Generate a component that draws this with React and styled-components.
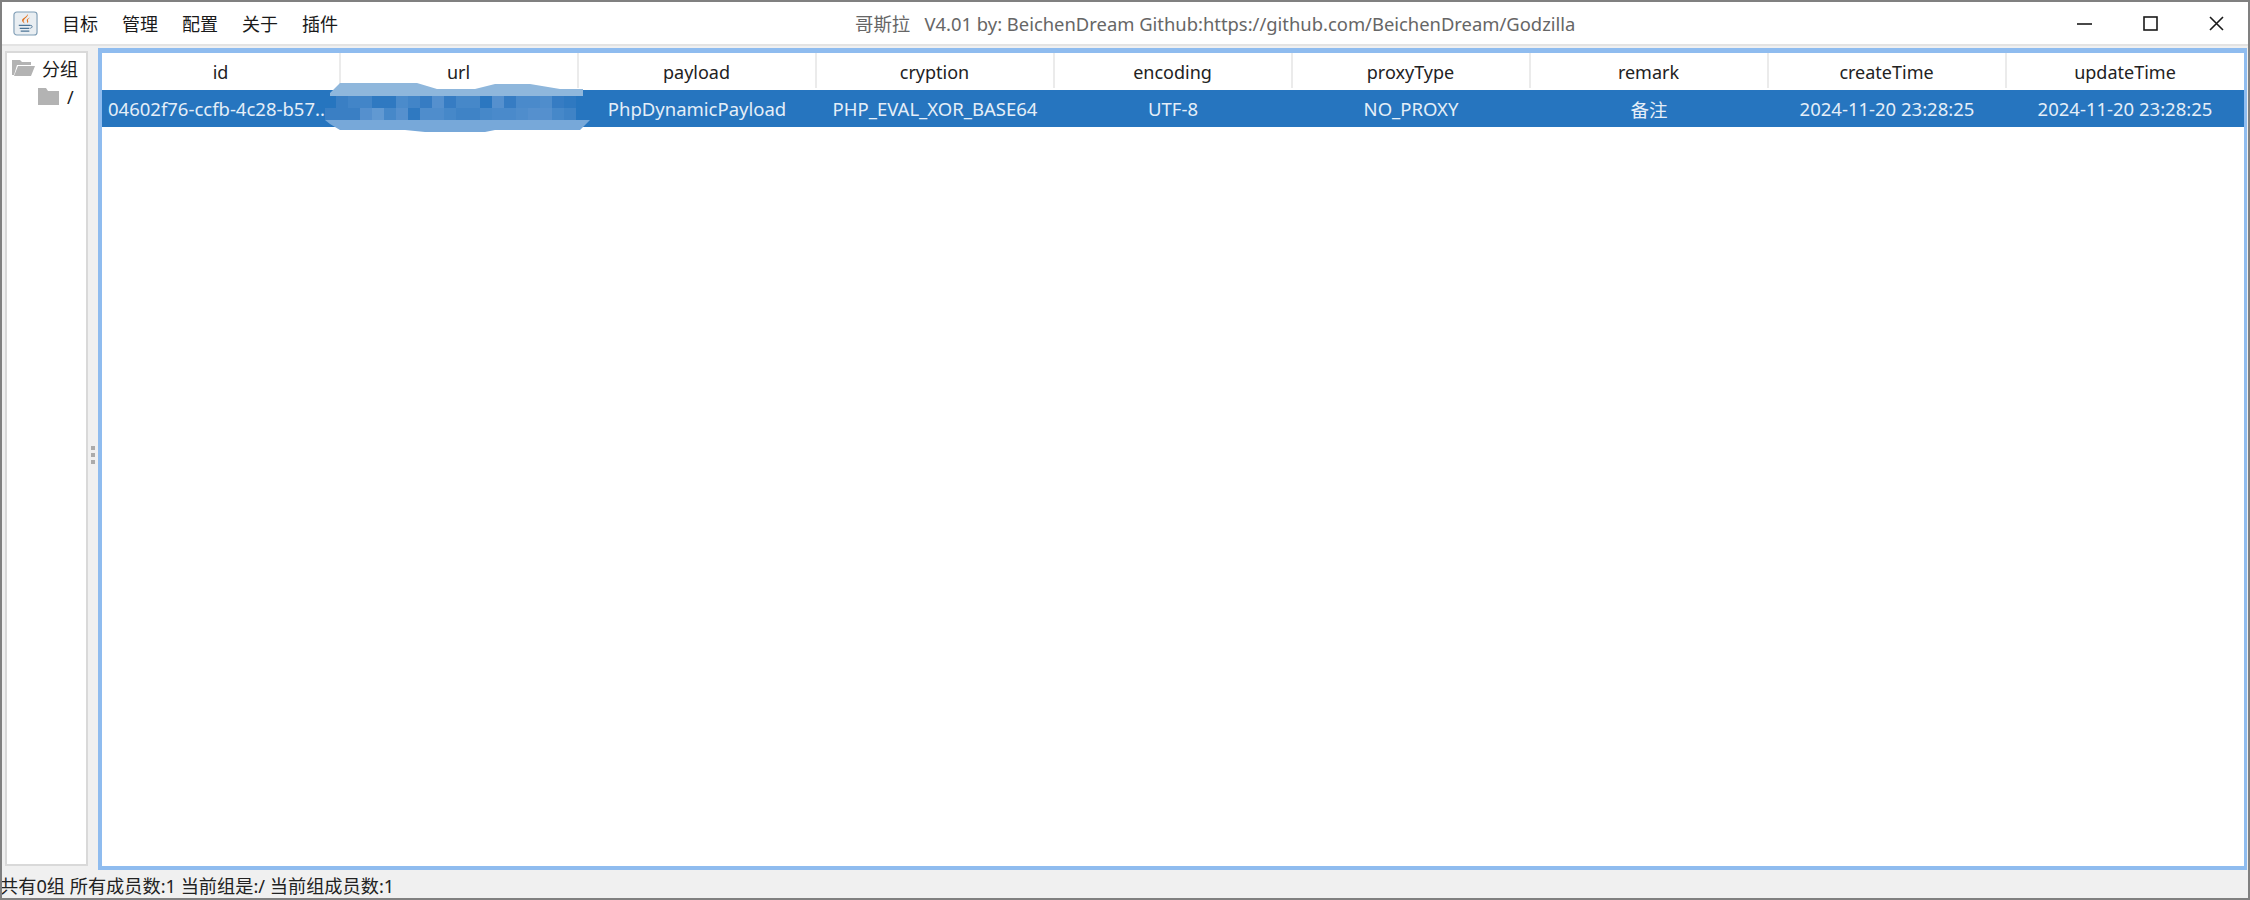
import React from "react";
import styled, { createGlobalStyle } from "styled-components";

const GlobalStyle = createGlobalStyle`
  html, body {
    margin: 0;
    padding: 0;
    background: #f0f0f0;
  }
  * { box-sizing: border-box; }
`;

const fontStack = `"Noto Sans", "Noto Sans CJK SC", sans-serif`;

const Window = styled.div`
  width: 2250px;
  height: 900px;
  display: flex;
  flex-direction: column;
  border: 2px solid #808080;
  background: #f0f0f0;
  font-family: ${fontStack};
  overflow: hidden;
`;

const TitleBar = styled.div`
  height: 44px;
  flex: none;
  display: flex;
  align-items: center;
  background: #fff;
  padding-left: 11px;
  border-bottom: 2px solid #e3e3e3;
`;

const AppIcon = styled.svg`
  width: 25px;
  height: 25px;
  flex: none;
`;

const Menu = styled.div`
  display: flex;
  gap: 24px;
  margin-left: 24px;
  font-size: 18px;
  color: #1a1a1a;
`;

const WindowTitle = styled.div`
  margin-left: 517px;
  font-size: 18.400px;
  color: #666;
  white-space: nowrap;
`;

const WindowButtons = styled.div`
  margin-left: auto;
  display: flex;
  gap: 51px;
  padding-right: 24px;
  align-items: center;
`;

const WindowButton = styled.svg`
  width: 15px;
  height: 15px;
  display: block;
  stroke: #1a1a1a;
  stroke-width: 1.600;
  fill: none;
`;

const Main = styled.div`
  flex: 1;
  min-height: 0;
  display: flex;
  padding: 2px 0 0 3px;
`;

const TreePane = styled.div`
  width: 83px;
  flex: none;
  margin: 3px 0 4px;
  background: #fff;
  border: 2px solid #d9d9d9;
  padding: 0 0 0 5px;
  font-size: 18px;
  color: #1a1a1a;
`;

const TreeRow = styled.div`
  display: flex;
  align-items: center;
  height: 29px;
  padding-left: ${(p) => p.$indent || 0}px;
  gap: 7px;
`;

const FolderIcon = styled.svg`
  width: 23px;
  height: 19px;
  flex: none;
  fill: #b3b3b3;
`;

const Divider = styled.div`
  width: 10px;
  flex: none;
  display: flex;
  flex-direction: column;
  align-items: center;
  justify-content: center;
  gap: 3px;
  padding-bottom: 8px;
`;

const Grip = styled.span`
  width: 4px;
  height: 4px;
  background: #ababab;
`;

const TableFrame = styled.div`
  flex: 1;
  margin-right: 1px;
  border: solid #8fbcef;
  border-width: 5px 3px 4px 4px;
  background: #fff;
  position: relative;
`;

const TableGrid = styled.div`
  display: grid;
  grid-template-columns: repeat(9, 1fr);
`;

const HeaderCell = styled.div`
  height: 35px;
  margin-bottom: 2px;
  padding-top: 2px;
  display: flex;
  align-items: center;
  justify-content: center;
  font-size: 18px;
  color: #222;
  border-right: ${(p) => (p.$last ? "none" : "1px solid #ebebeb")};
  box-shadow: ${(p) => (p.$last ? "none" : "1px 0 0 #ebebeb")};
`;

const RowCell = styled.div`
  height: 37px;
  display: flex;
  align-items: center;
  justify-content: ${(p) => (p.$left ? "flex-start" : "center")};
  padding-left: ${(p) => (p.$left ? "6px" : "0")};
  font-size: 18.500px;
  color: #e4eef8;
  background: #2675bf;
  white-space: nowrap;
  overflow: hidden;
`;

const Redaction = styled.svg`
  position: absolute;
  left: 223px;
  top: 30px;
  width: 270px;
  height: 50px;
`;

const StatusBar = styled.div`
  height: 28px;
  flex: none;
  padding-top: 1px;
  display: flex;
  align-items: center;
  font-size: 18.200px;
  color: #222;
  margin-left: -2px;
  white-space: nowrap;
`;

const columns = ["id", "url", "payload", "cryption", "encoding", "proxyType", "remark", "createTime", "updateTime"];

const row = [
  "04602f76-ccfb-4c28-b57...",
  "",
  "PhpDynamicPayload",
  "PHP_EVAL_XOR_BASE64",
  "UTF-8",
  "NO_PROXY",
  "备注",
  "2024-11-20 23:28:25",
  "2024-11-20 23:28:25",
];

const menuItems = ["目标", "管理", "配置", "关于", "插件"];

// mosaic colours of the blurred url, two rows of blocks
const mosaic = [
  ["#3a7fc4", "#4285c8", "#4285c8", "#2f79c1", "#2f79c1", "#4b8bcb", "#4285c8", "#367cc3", "#5590ce", "#367cc3", "#4688c9", "#4688c9", "#2b77c0", "#5590ce", "#367cc3", "#4a8acb", "#4a8acb", "#4f8dcc", "#367cc3", "#2f79c1"],
  ["#3a7fc4", "#3a7fc4", "#5590ce", "#6199d2", "#4688c9", "#5590ce", "#2f79c1", "#4f8dcc", "#4f8dcc", "#4688c9", "#3f83c6", "#3f83c6", "#4688c9", "#4a8acb", "#4a8acb", "#4f8dcc", "#5590ce", "#5590ce", "#4688c9", "#3f83c6"],
];

function JavaIcon() {
  return (
    <AppIcon viewBox="0 0 26 26">
      <rect x="1" y="1" width="24" height="24" rx="3" fill="#e9eef2" stroke="#7f9db5" strokeWidth="1.200" />
      <path d="M15 3c2 2.500-4 4.500-4 7.500 0 1 .8 1.800 1.500 2.500-2.200-1-3.400-2-3-3.800C10 7 15 6 15 3z" fill="#e2711d" />
      <path d="M17 7c-2 1-3 2-2.600 3.500.2.800.7 1.400.6 2.200 1-.8 1-1.700.6-2.500-.4-1 .2-2 2-3.200z" fill="#e2711d" />
      <path d="M6 15h12M7 18h10M8 21h9" stroke="#4c7596" strokeWidth="1.300" fill="none" />
      <path d="M18 15c2.500-.5 2.500 2.500 0 3" stroke="#4c7596" strokeWidth="1" fill="none" />
    </AppIcon>
  );
}

function App() {
  return (
    <>
      <GlobalStyle />
      <Window>
        <TitleBar>
          <JavaIcon />
          <Menu>
            {menuItems.map((m) => (
              <span key={m}>{m}</span>
            ))}
          </Menu>
          <WindowTitle>哥斯拉&nbsp;&nbsp;&nbsp;V4.01 by: BeichenDream Github:https://github.com/BeichenDream/Godzilla</WindowTitle>
          <WindowButtons>
            <WindowButton viewBox="0 0 15 15">
              <path d="M0 8h15" />
            </WindowButton>
            <WindowButton viewBox="0 0 15 15">
              <rect x="1" y="1" width="13" height="13" />
            </WindowButton>
            <WindowButton viewBox="0 0 15 15">
              <path d="M1 1l13 13M14 1L1 14" />
            </WindowButton>
          </WindowButtons>
        </TitleBar>
        <Main>
          <TreePane>
            <TreeRow>
              <FolderIcon viewBox="0 0 23 19">
                <path d="M0 2h8l2 2h9v3H5L2 17H0z" />
                <path d="M6 8h17l-4 10H2z" />
              </FolderIcon>
              <span>分组</span>
            </TreeRow>
            <TreeRow $indent={25}>
              <FolderIcon viewBox="0 0 23 19">
                <path d="M1 1h8l2 3h11v14H1z" />
              </FolderIcon>
              <span>/</span>
            </TreeRow>
          </TreePane>
          <Divider>
            <Grip />
            <Grip />
            <Grip />
          </Divider>
          <TableFrame>
            <TableGrid>
              {columns.map((c, i) => (
                <HeaderCell key={c} $last={i === columns.length - 1}>
                  {c}
                </HeaderCell>
              ))}
              {row.map((v, i) => (
                <RowCell key={i} $left={i === 0}>
                  {v}
                </RowCell>
              ))}
            </TableGrid>
            <Redaction viewBox="0 0 270 50">
              <path d="M5 10L15 0H92L112 6H150L170 1H205L235 6H258V13H5z" fill="#8fb7dc" />
              <path d="M0 37H265L255 47H170L160 49H100L80 47H15L5 41z" fill="#77a8d9" />
              {mosaic.map((line, r) =>
                line.map((fill, c) => (
                  <rect key={`${r}-${c}`} x={c * 12 + 11} y={r * 12 + 13} width="12" height="12" fill={fill} />
                ))
              )}
              <rect x="0" y="25" width="11" height="12" fill="#3a7fc4" />
            </Redaction>
          </TableFrame>
        </Main>
        <StatusBar>共有0组 所有成员数:1 当前组是:/ 当前组成员数:1</StatusBar>
      </Window>
    </>
  );
}

export default App;
